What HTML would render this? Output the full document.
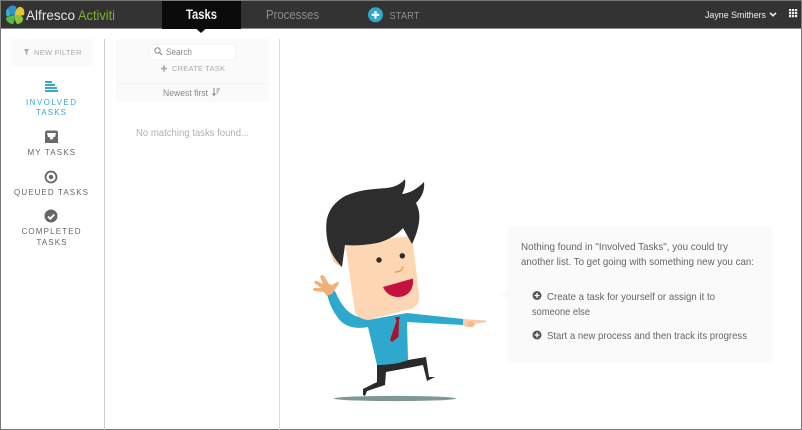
<!DOCTYPE html>
<html><head><meta charset="utf-8"><style>
html,body{margin:0;padding:0;background:#fff}
svg{display:block}
text{font-family:"Liberation Sans",sans-serif}
</style></head><body>
<svg width="802" height="430" viewBox="0 0 802 430" xmlns="http://www.w3.org/2000/svg">
<rect width="802" height="430" fill="#fff"/>
<rect x="0" y="0" width="802" height="29" fill="#333"/>
<rect x="0" y="0" width="802" height="1" fill="#7a7a7a"/>
<rect x="0" y="28" width="802" height="1" fill="#8a8a8a"/>
<rect x="162" y="1" width="79" height="28" fill="#0b0b0b"/>
<path d="M196 28.500H206L201 33Z" fill="#0b0b0b"/>
<g>
<path d="M15 15C8 15 6 10 9 7C11 5 15 5 16 7C17 10 16 13 15 15Z" fill="#2f8fcf"/>
<path d="M15 15C15 10 18 6 21 7C24 8 25 12 24 15C21 16 18 16 15 15Z" fill="#e3c62f"/>
<path d="M15 15C19 15 24 16 23 20C22 23 19 24 17 24C15 21 14 18 15 15Z" fill="#8cc63f"/>
<path d="M15 15C14 18 15 22 13 24C9 24 6 21 6 18C9 16 12 15 15 15Z" fill="#58b947"/>
<path d="M7 17C5 13 6 10 8 8C9 11 10 14 11 15Z" fill="#35b0c8"/>
</g>
<text x="26" y="20" font-size="14" fill="#e6e6e6" textLength="49" lengthAdjust="spacingAndGlyphs">Alfresco</text>
<text x="78" y="20" font-size="14" fill="#7db52e" textLength="37" lengthAdjust="spacingAndGlyphs">Activiti</text>
<text x="186" y="19" font-size="13.500" font-weight="bold" fill="#f2f2f2" textLength="31" lengthAdjust="spacingAndGlyphs">Tasks</text>
<text x="266" y="19" font-size="12.500" fill="#8e8e8e" textLength="53" lengthAdjust="spacingAndGlyphs">Processes</text>
<circle cx="375.500" cy="14.800" r="7.500" fill="#2ea8cc"/>
<path d="M375.500 11V18.600M371.700 14.800H379.300" stroke="#fff" stroke-width="2.200"/>
<text x="389.500" y="19" font-size="10.500" fill="#8e8e8e" textLength="30" lengthAdjust="spacingAndGlyphs">START</text>
<text x="705" y="18" font-size="9.500" fill="#f0f0f0" textLength="61" lengthAdjust="spacingAndGlyphs">Jayne Smithers</text>
<path d="M770 12.800L773 15.800L776 12.800" fill="none" stroke="#f0f0f0" stroke-width="1.600"/>
<path d="M789 9h2.200v2.200h-2.200zM792 9h2.200v2.200h-2.200zM795 9h2.200v2.200h-2.200zM789 12h2.200v2.200h-2.200zM792 12h2.200v2.200h-2.200zM795 12h2.200v2.200h-2.200zM789 15h2.200v2.200h-2.200zM792 15h2.200v2.200h-2.200zM795 15h2.200v2.200h-2.200z" fill="#f2f2f2"/>

<rect x="0" y="0" width="1" height="430" fill="#7a7a7a"/>
<rect x="801" y="0" width="1" height="430" fill="#7a7a7a"/>
<rect x="0" y="429" width="802" height="1" fill="#7a7a7a"/>

<rect x="10" y="39" width="84" height="27" fill="#fafafa"/>
<path d="M24 49H29L27.300 52V54.500H25.700V52Z" fill="#aaa"/>
<text x="34" y="55" font-size="7.500" fill="#aaa" textLength="47.500">NEW FILTER</text>
<rect x="104" y="39" width="1" height="391" fill="#ccc"/>
<rect x="279" y="39" width="1" height="391" fill="#ddd"/>

<rect x="116" y="39" width="153" height="63" fill="#fafafa"/>
<rect x="116" y="83" width="153" height="1" fill="#f3f3f3"/>
<rect x="149.500" y="44.500" width="86" height="15" rx="2" fill="#fff" stroke="#f5f5f5"/>
<circle cx="157.500" cy="50.500" r="2.700" fill="none" stroke="#888" stroke-width="1"/>
<path d="M159.500 52.500L162 55" stroke="#888" stroke-width="1.200"/>
<text x="166" y="55" font-size="9" fill="#888" textLength="26" lengthAdjust="spacingAndGlyphs">Search</text>
<path d="M164 65.500V71.500M161 68.500H167" stroke="#aaa" stroke-width="1.800"/>
<text x="172" y="71" font-size="7.500" fill="#aaa" textLength="53">CREATE TASK</text>
<text x="163" y="96" font-size="9.500" fill="#888" textLength="45" lengthAdjust="spacingAndGlyphs">Newest first</text>
<path d="M214 88V95M212.500 93.500L214 95.500L215.500 93.500" fill="none" stroke="#888" stroke-width="1"/>
<path d="M216.500 89H220M216.500 91H219M216.500 93H218" stroke="#888" stroke-width="1.100"/>
<text x="136" y="136" font-size="10.500" fill="#b0b0b0" textLength="113" lengthAdjust="spacingAndGlyphs">No matching tasks found...</text>

<path d="M45 81h7v2h-7zM45 84h10v2h-10zM45 87h12v2h-12zM45 90h13v2h-13z" fill="#3aa9c9"/>
<text x="26" y="105" font-size="8" fill="#3aa9c9" textLength="50">INVOLVED</text>
<text x="36" y="115" font-size="8" fill="#3aa9c9" textLength="30">TASKS</text>
<path d="M47 130.500H56Q57.500 130.500 58 132.500V143H45V132.500Q45.500 130.500 47 130.500Z" fill="#6a6a6a"/>
<path d="M47 133H56L55 137H53.500L52.500 139.500H50.500L49.500 137H48Z" fill="#fff"/>
<text x="27.500" y="155" font-size="8" fill="#666" textLength="47.500">MY TASKS</text>
<circle cx="51" cy="177" r="5.500" fill="none" stroke="#666" stroke-width="1.800"/>
<circle cx="51" cy="177" r="2.200" fill="#666"/>
<text x="14" y="195" font-size="8" fill="#666" textLength="74">QUEUED TASKS</text>
<circle cx="51" cy="216" r="6.500" fill="#666"/>
<path d="M48 216.500L50.300 218.800L54.300 214.500" fill="none" stroke="#fff" stroke-width="1.800"/>
<text x="21.500" y="234" font-size="8" fill="#666" textLength="59">COMPLETED</text>
<text x="36.500" y="245" font-size="8" fill="#666" textLength="30">TASKS</text>

<path d="M507 234Q507 226 515 226H765Q773 226 773 234V355Q773 363 765 363H515Q507 363 507 355V299L499.500 295L507 291Z" fill="#fafafa"/>
<g font-size="10.500" fill="#666">
<text x="521" y="250" textLength="207" lengthAdjust="spacingAndGlyphs">Nothing found in "Involved Tasks", you could try</text>
<text x="521" y="265" textLength="233" lengthAdjust="spacingAndGlyphs">another list. To get going with something new you can:</text>
<text x="547" y="300" textLength="168" lengthAdjust="spacingAndGlyphs">Create a task for yourself or assign it to</text>
<text x="532" y="315" textLength="58" lengthAdjust="spacingAndGlyphs">someone else</text>
<text x="547" y="339" textLength="200" lengthAdjust="spacingAndGlyphs">Start a new process and then track its progress</text>
</g>
<circle cx="537" cy="295.500" r="4.500" fill="#555"/>
<path d="M537 293V298M534.500 295.500H539.500" stroke="#fff" stroke-width="1.300"/>
<circle cx="537" cy="335" r="4.500" fill="#555"/>
<path d="M537 332.500V337.500M534.500 335H539.500" stroke="#fff" stroke-width="1.300"/>

<ellipse cx="395" cy="398.500" rx="61" ry="2.600" fill="#7e9797"/>
<path d="M377 365L408 360L426 357L429 377L435 377L427 381L423 365L413 367L386 372L385 385L367 391L365 396L363 395L363 389L377 382Z" fill="#2a2a2a"/>
<path d="M327 293L335 291C340 303 347 313 356 316L368 320L407 313L463 319V325L407 322L408 360C398 364 387 365 377 365L368 327C358 329 345 328 338 318C333 311 329 304 327 293Z" fill="#2ea8cc"/>
<path d="M395 317H400L399 320L398.500 337L392 342L390 340L396.500 321Z" fill="#a5162c"/>
<path d="M463 319L486 320.500Q487 322 485 322.500L476 323.500L473 327.500L466 327L463 325Z" fill="#f7cba5"/>
<path d="M468 323.500Q473 321.500 472.500 324.500Q471 326 468.500 325" fill="none" stroke="#e0a070" stroke-width=".8"/>
<path d="M332 285L338 281.500Q340 283 337.500 285.500L332 294L327 296L324 292L314 291Q312 289 314 288L321 288L314.500 283Q314 280 317 281L323 284L320 276.500Q322 274 324 276L329 284Z" fill="#efb07c"/>
<path d="M343 240L328 245L332 258Q334 264 342 267Z" fill="#f8c9a2"/>
<path d="M345 243L412 236L419 295Q420 307 410 309L368 320Q358 319 355 312Z" fill="#fdd6b3"/>
<path d="M326.700 220C329 209 335 202 345 196C358 190 372 189 387 188C395 187 401 184 405 179C406 185 404 190 402 194C411 193 418 188 424 182C425 190 422 197 416 203C419 209 420 215 419 222C418 230 415 238 412 244L403 228C396 236 386 241 377 243C366 245 355 246 345 245L342 267C334 259 328 248 327 238C326 232 326 226 326.700 220Z" fill="#2d2d2d"/>
<circle cx="379" cy="260" r="2.700" fill="#2d2d2d"/>
<circle cx="402.300" cy="255.800" r="2.700" fill="#2d2d2d"/>
<path d="M395 272Q402 272 403 266.500" fill="none" stroke="#e8973a" stroke-width="1.200"/>
<path d="M383 287L413 278.500Q414 290 406 295Q398 299 390 295Q385 292 383 287Z" fill="#c3123f"/>
</svg>
</body></html>
